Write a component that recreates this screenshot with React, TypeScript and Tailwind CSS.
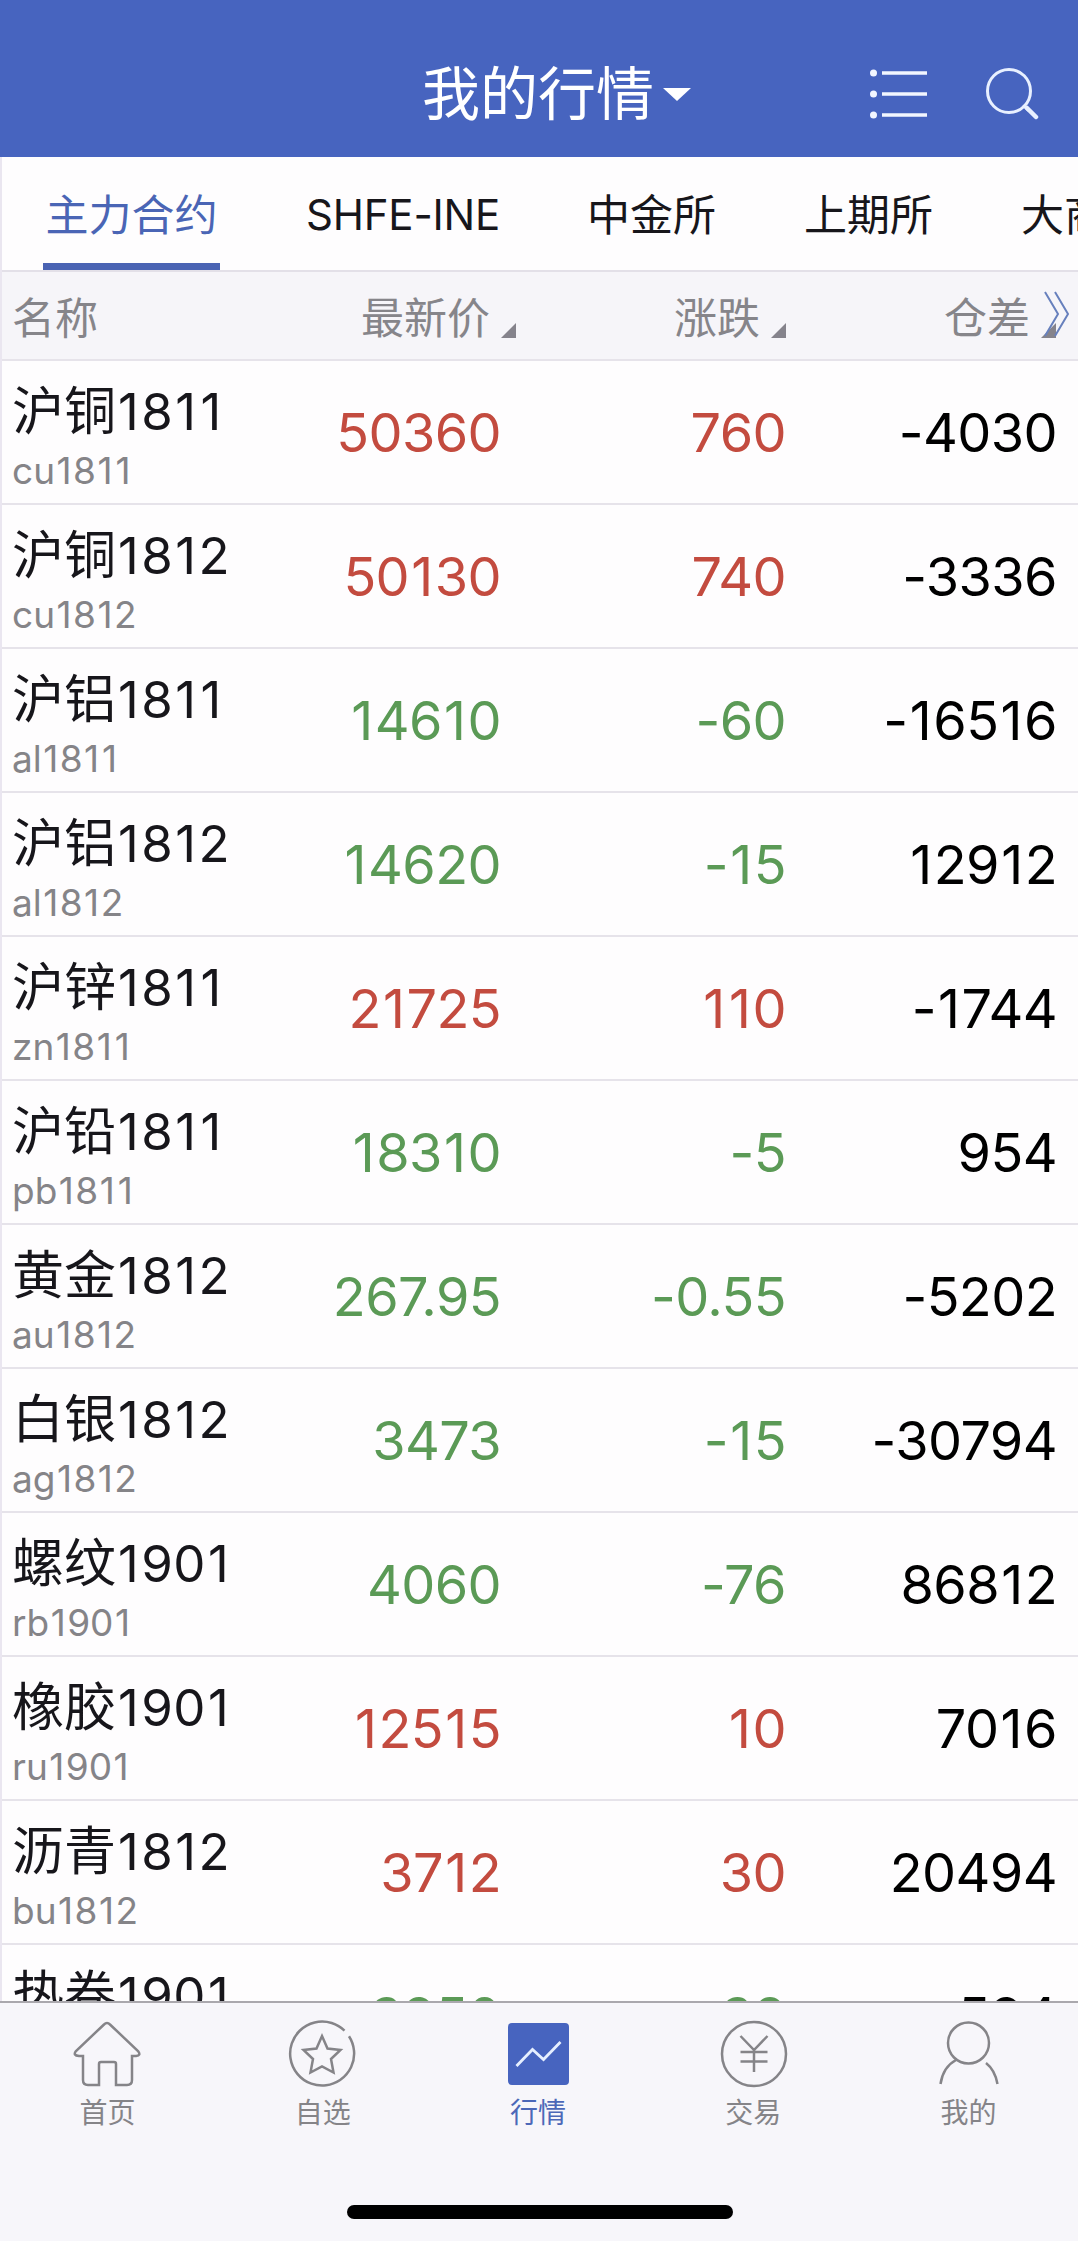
import React from 'react';

type Quote = {
  name: string;
  code: string;
  price: string;
  change: string;
  diff: string;
  up: boolean;
};

const quotes: Quote[] = [
  { name: '沪铜', code: 'cu1811', price: '50360', change: '760', diff: '-4030', up: true },
  { name: '沪铜', code: 'cu1812', price: '50130', change: '740', diff: '-3336', up: true },
  { name: '沪铝', code: 'al1811', price: '14610', change: '-60', diff: '-16516', up: false },
  { name: '沪铝', code: 'al1812', price: '14620', change: '-15', diff: '12912', up: false },
  { name: '沪锌', code: 'zn1811', price: '21725', change: '110', diff: '-1744', up: true },
  { name: '沪铅', code: 'pb1811', price: '18310', change: '-5', diff: '954', up: false },
  { name: '黄金', code: 'au1812', price: '267.95', change: '-0.55', diff: '-5202', up: false },
  { name: '白银', code: 'ag1812', price: '3473', change: '-15', diff: '-30794', up: false },
  { name: '螺纹', code: 'rb1901', price: '4060', change: '-76', diff: '86812', up: false },
  { name: '橡胶', code: 'ru1901', price: '12515', change: '10', diff: '7016', up: true },
  { name: '沥青', code: 'bu1812', price: '3712', change: '30', diff: '20494', up: true },
  { name: '热卷', code: 'hc1901', price: '3950', change: '-38', diff: '594', up: false },
];

const tabs = ['主力合约', 'SHFE-INE', '中金所', '上期所', '大商所'];

// Inter's "1" is narrow, so give it a little room on both sides
const Digits = ({ value }: { value: string }) => (
  <>
    {value.split(/(1)/).map((part, i) =>
      part === '1' ? (
        <span key={i} className="px-[0.04em]">
          1
        </span>
      ) : (
        part
      ),
    )}
  </>
);

const SortMark = () => (
  <svg width="15" height="15" viewBox="0 0 15 15" fill="#85838c">
    <path d="M15 0V15H0Z" />
  </svg>
);

const Header = () => (
  <header className="flex h-[157px] shrink-0 items-center bg-[#4764bf] pt-[30px] text-white">
    <div className="flex flex-1 items-center pl-[422px]">
      <h1 className="text-[58px] leading-[64px] font-normal">我的行情</h1>
      <svg className="mt-[2px] ml-[9px]" width="28" height="13" viewBox="0 0 28 13" fill="#fff">
        <path d="M0 0H28L14 13Z" />
      </svg>
    </div>
    <svg className="mr-[57px]" width="60" height="50" viewBox="0 0 60 50" fill="#f2f6ff">
      <circle cx="4.500" cy="4" r="3.500" />
      <circle cx="4.500" cy="25" r="3.500" />
      <circle cx="4.500" cy="46" r="3.500" />
      <path d="M13 2.300H58V5.700H13ZM13 23.300H58V26.700H13ZM13 44.300H58V47.700H13Z" />
    </svg>
    <svg
      className="mr-[39px]"
      width="53"
      height="54"
      viewBox="0 0 53 54"
      fill="none"
      stroke="#e8f0ff"
      strokeLinecap="round"
    >
      <circle cx="23" cy="24" r="21.500" strokeWidth="3" />
      <path d="M38 39L42 43" strokeWidth="3" />
      <path d="M41 41L50 50" strokeWidth="4.500" />
    </svg>
  </header>
);

const Tabs = () => (
  <nav className="flex h-[115px] shrink-0 overflow-hidden border-b-2 border-[#e3e0e8] pl-[41px] text-[43px] whitespace-nowrap text-[#17161b]">
    {tabs.map((tab, i) => (
      <div
        key={tab}
        className={
          i === 0
            ? 'mr-[86px] flex w-[177px] shrink-0 flex-col items-center justify-between text-[#4a65b5]'
            : i === 1
              ? 'mr-[87px] w-[194px] shrink-0 text-[42px] tracking-[-0.2px]'
              : 'mr-[88px] shrink-0'
        }
      >
        <span className="block pt-[28px] leading-[60px]">{tab}</span>
        {i === 0 && <span className="h-[7px] w-full bg-[#4a63b3]" />}
      </div>
    ))}
  </nav>
);

const ColumnHeader = () => (
  <div className="flex h-[89px] shrink-0 items-center border-b-2 border-[#e6e3ea] bg-[#f6f5f9] pt-[4px] text-[43px] leading-[60px] text-[#86858a]">
    <span className="w-[347px] pl-[10px]">名称</span>
    <div className="flex w-[313px] items-end gap-[11px] pl-[12px]">
      最新价
      <span className="pb-[10px]">
        <SortMark />
      </span>
    </div>
    <div className="flex w-[270px] items-end gap-[11px] pl-[12px]">
      涨跌
      <span className="pb-[10px]">
        <SortMark />
      </span>
    </div>
    <div className="relative flex items-end gap-[11px] pl-[12px]">
      仓差
      <span className="pb-[10px]">
        <SortMark />
      </span>
      <svg
        className="absolute top-[3px] left-[111px]"
        width="28"
        height="46"
        viewBox="0 0 28 46"
        fill="none"
        stroke="#6780bd"
        strokeWidth="2"
      >
        <path d="M2 1L15 23L2 45M12 1L25 23L12 45" />
      </svg>
    </div>
  </div>
);

const QuoteRow = ({ quote }: { quote: Quote }) => {
  const color = quote.up ? 'text-[#c34b3f]' : 'text-[#5b9a56]';
  return (
    <div className="flex h-[144px] shrink-0 items-center border-b-2 border-[#e6e3ea] text-[54px] tracking-[-0.6px]">
      <div className="flex w-[278px] flex-col pt-[12px] pl-[10px] tracking-normal">
        <span className="text-[52px] leading-[66px] text-[#17161b]">
          {quote.name}
          <span className="text-[51px] tracking-[0.4px]">
            <Digits value={quote.code.slice(2)} />
          </span>
        </span>
        <span className="text-[37px] leading-[52px] text-[#858488]">
          <Digits value={quote.code} />
        </span>
      </div>
      <span className={`w-[221px] text-right ${color}`}>
        <Digits value={quote.price} />
      </span>
      <span className={`w-[285px] text-right ${color}`}>
        <Digits value={quote.change} />
      </span>
      <span className="w-[271px] text-right text-black">
        <Digits value={quote.diff} />
      </span>
    </div>
  );
};

const HomeIcon = () => (
  <path d="M30 3.500Q33 .500 36 3.500L64 30Q67.500 34.500 62 35H58V59Q58 64 53 64H42V43Q42 41 40 41H27Q25 41 25 43V64H14Q9 64 9 59V35H5Q-1.500 34.500 2 30Z" />
);

const StarIcon = () => (
  <>
    <path d="M55.500 9.700A32 32 0 1 0 60 15.200" />
    <path d="M33 15L38.500 27.500L51.500 29L42 38L44.500 51.500L33 45.500L21.500 51.500L24 38L14.500 29L27.500 27.500Z" />
  </>
);

const ChartIcon = () => (
  <>
    <rect x="4" y="2" width="61" height="62" rx="4" fill="#4764bf" stroke="none" />
    <path d="M12.500 45L28.500 28.500L39.500 38.500L56.500 21" stroke="#e6efff" strokeWidth="2.800" />
  </>
);

const YenIcon = () => (
  <>
    <circle cx="35" cy="33" r="32" />
    <path d="M21.500 15L35 29L48.500 15M35 29V51M21.500 31H48.500M21.500 40.500H48.500" />
  </>
);

const UserIcon = () => (
  <>
    <circle cx="34.500" cy="22" r="20.500" />
    <path d="M22 39Q9 46 6.500 63M52 42Q61 49 63.500 63" />
  </>
);

const navItems = [
  { label: '首页', icon: <HomeIcon /> },
  { label: '自选', icon: <StarIcon /> },
  { label: '行情', icon: <ChartIcon />, active: true },
  { label: '交易', icon: <YenIcon /> },
  { label: '我的', icon: <UserIcon /> },
];

const BottomNav = () => (
  <footer className="flex h-[240px] shrink-0 flex-col items-center border-t-2 border-[#aaa8ad] bg-[#f7f6fa]">
    <div className="flex w-full pt-[18px] pr-[2px]">
      {navItems.map((item) => (
        <div
          key={item.label}
          className={`flex flex-1 flex-col items-center ${item.active ? 'text-[#4c68b8]' : 'text-[#858488]'}`}
        >
          <svg
            width="68"
            height="68"
            viewBox="0 0 68 68"
            fill="none"
            stroke="currentColor"
            strokeWidth="2.500"
            overflow="visible"
          >
            {item.icon}
          </svg>
          <span className="mt-[6px] text-[28px] leading-[36px]">{item.label}</span>
        </div>
      ))}
    </div>
    <div className="mt-[74px] ml-[2px] h-[14px] w-[386px] rounded-full bg-black" />
  </footer>
);

export default function App() {
  return (
    <div className="flex h-[2241px] w-[1078px] flex-col overflow-hidden bg-white font-['Inter','Noto_Sans_CJK_SC',sans-serif]">
      <Header />
      <main className="flex h-[1844px] flex-col overflow-hidden border-l-2 border-[#eae6f0] bg-[#fefdfe]">
        <Tabs />
        <ColumnHeader />
        {quotes.map((quote) => (
          <QuoteRow key={quote.code} quote={quote} />
        ))}
      </main>
      <BottomNav />
    </div>
  );
}
